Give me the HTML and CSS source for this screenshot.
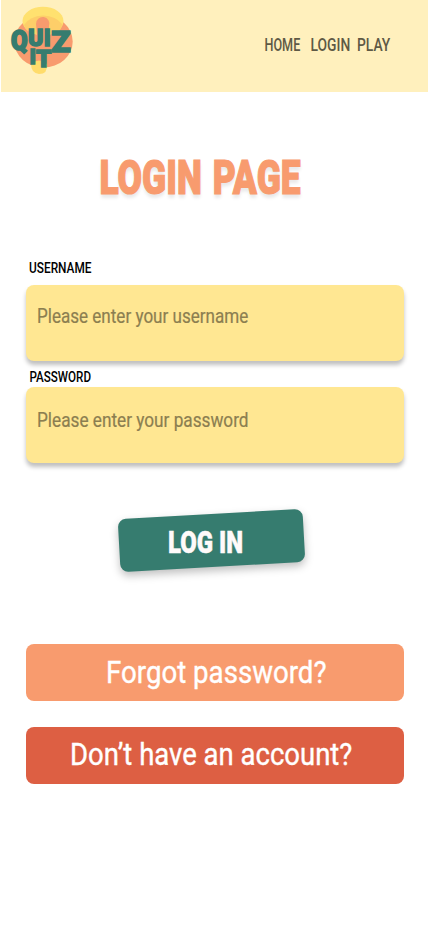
FILE: index.html
```
<!DOCTYPE html>
<html lang="en">
<head>
<meta charset="utf-8">
<title>Quiz It</title>
<link rel="stylesheet" href="styles.css">
</head>
<body>
<header class="header">
  <svg class="logo" width="90" height="92" viewBox="0 0 90 92" role="img" aria-label="Quiz It">
    <ellipse cx="43.5" cy="41.5" rx="29.2" ry="26" fill="#f89b6e"/>
    <ellipse cx="43" cy="21" rx="20.5" ry="14.3" fill="#ffe16f"/>
    <path d="M24 25Q30 16 43 15.5Q56 16 62 24Q62 35 43 35Q26 34 24 25Z" fill="#fdce69"/>
    <path d="M36 24a6.7 6.7 0 1 1 13 2v17q0 12-10 13z" fill="#f89b6e"/>
    <path d="M31 64Q39 57 47 64Q48 74 39 74Q31 73 31 64Z" fill="#ffdc6b"/>
    <g class="logo-letters">
      <text x="11" y="49.5" font-size="27" textLength="16.5" lengthAdjust="spacingAndGlyphs">Q</text>
      <text x="28.3" y="45.5" font-size="23" textLength="15" lengthAdjust="spacingAndGlyphs">U</text>
      <text x="44" y="45.5" font-size="23" textLength="6.5" lengthAdjust="spacingAndGlyphs">I</text>
      <text x="51.5" y="52" font-size="29.5" textLength="19" lengthAdjust="spacingAndGlyphs">Z</text>
      <text x="29.7" y="64" font-size="20" textLength="6" lengthAdjust="spacingAndGlyphs">I</text>
      <text x="36.3" y="66.8" font-size="24.5" textLength="15" lengthAdjust="spacingAndGlyphs">T</text>
    </g>
  </svg>
  <nav class="nav">
    <a class="nav-link home"><span>HOME</span></a>
    <a class="nav-link login"><span>LOGIN</span></a>
    <a class="nav-link play"><span>PLAY</span></a>
  </nav>
</header>
<main class="main">
  <h1 class="title"><span>LOGIN PAGE</span></h1>
  <div class="label"><span class="label-user">USERNAME</span></div>
  <div class="field"><span class="hint hint-user">Please enter your username</span></div>
  <div class="label label-second"><span class="label-pass">PASSWORD</span></div>
  <div class="field field-second"><span class="hint hint-pass">Please enter your password</span></div>
  <div class="submit"><span>LOG IN</span></div>
  <div class="action forgot"><span>Forgot password?</span></div>
  <div class="action signup"><span>Don’t have an account?</span></div>
</main>
</body>
</html>
```
FILE: styles.css
```
body { margin: 0; background: #fff; font-family: Roboto, "Liberation Sans", sans-serif; overflow-x: hidden; }
span { display: inline-block; white-space: nowrap; transform-origin: 0 50%; }
.header { display: flex; justify-content: space-between; height: 92px; margin-left: 1px; background: #fff0bd; }
.logo { margin-left: -1px; }
.logo-letters { fill: #367c6f; stroke: #367c6f; stroke-width: 1.7; font-weight: 900; }
.nav { display: flex; width: 164px; padding-top: 35px; font-size: 17.5px; line-height: 20px; font-weight: 500; color: #5e5945; }
.nav-link { flex: none; }
.home { width: 46px; }
.login { width: 47px; }
.play { width: 40px; }
.home span { transform: translateX(.5px) scaleX(.72); }
.login span { transform: translateX(.5px) scaleX(.79); }
.play span { transform: scaleX(.79); }
.main { padding: 0 24px 0 26px; }
.title { margin: 58px 0 0; padding-left: 73px; height: 55px; font-size: 47.5px; line-height: 56px; font-weight: 900; word-spacing: 3px; color: #f89b6e; text-shadow: 0 4px 4px rgba(0,0,0,.09); -webkit-text-stroke: 1.2px #f89b6e; }
.title span { transform: translateX(.5px) scaleX(.746); }
.label { margin-top: 53px; padding-left: 3px; height: 20px; font-size: 15.5px; line-height: 20px; font-weight: 500; color: #000; }
.label span { transform: scaleX(.765); }
.label .label-pass { transform: translateX(.5px) scaleX(.75); }
.field { margin-top: 7px; height: 51px; padding: 25px 0 0 11px; border-radius: 8px; background: #ffe792; box-shadow: 0 4px 4px rgba(0,0,0,.25); }
.hint { font-size: 20px; line-height: 24px; height: 24px; color: #8b7e50; -webkit-text-stroke: .2px #8b7e50; transform: translateY(-6px) scaleX(.853); }
.label-second { margin-top: 6px; }
.field-second { margin-top: 0; }
.field-second .hint { padding-top: 2px; transform: translateY(-6px) scaleX(.86); }
.submit { width: 185px; height: 53px; margin: 51px 0 0 93px; border-radius: 8px; background: #367c6f; box-shadow: 0 4px 8px rgba(0,0,0,.25); transform: rotate(-3.2deg); font-size: 31.5px; line-height: 53px; font-weight: 900; color: #fffafa; -webkit-text-stroke: .5px #fffafa; }
.submit span { margin-left: 49px; transform: translateY(-.5px) rotate(3.2deg) scaleX(.76); }
.action { height: 57px; border-radius: 8px; font-size: 31px; line-height: 56px; color: #fff; -webkit-text-stroke: .4px #fff; }
.forgot { margin-top: 77px; background: #f89b6e; }
.forgot span { margin-left: 80px; transform: translateY(1px) scaleX(.892); }
.signup { margin-top: 26px; background: #dd5f43; }
.signup span { margin-left: 44px; transform: scaleX(.887); }
```
